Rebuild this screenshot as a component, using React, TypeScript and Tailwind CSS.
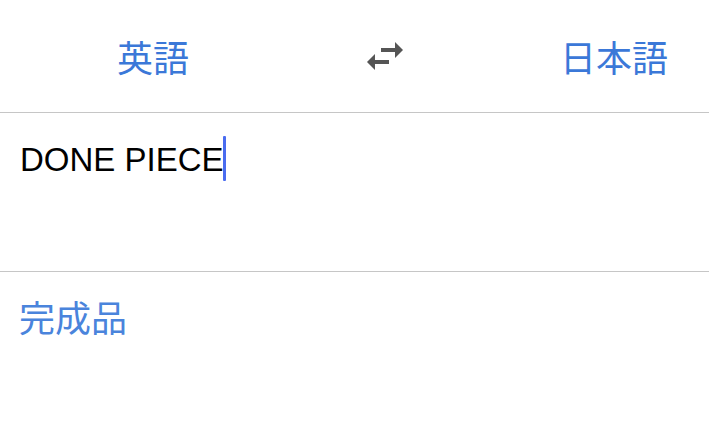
import React from "react";

const cjk = { fontFamily: '"Noto Sans CJK JP", "Noto Sans", sans-serif' };

export default function App() {
  return (
    <div className="w-[709px] h-[431px] bg-white overflow-hidden" style={{ fontFamily: '"Liberation Sans", Arial, sans-serif' }}>
      <div className="h-[113px] flex items-center border-b border-[#c6c6c6]">
        <div className="ml-[117px] text-[36px] leading-none text-[#3b78d8]" style={cjk}>英語</div>
        <div className="ml-[172px] w-[48px] h-[48px] flex items-center justify-center">
          <svg width="48" height="48" viewBox="0 0 24 24" fill="#555555">
            <path d="M6.99 11L3 15l3.99 4v-3H14v-2H6.99v-3zM21 9l-4-4v3H10v2h7v3l4-4z" />
          </svg>
        </div>
        <div className="ml-[151px] text-[36px] leading-none text-[#3b78d8]" style={cjk}>日本語</div>
      </div>
      <div className="h-[159px] border-b border-[#c6c6c6] pt-[23px] pl-[20px]">
        <div className="flex items-start">
          <span className="mt-[5px] text-[33px] leading-[38px] text-black">DONE PIECE</span>
          <span className="-ml-[1px] w-[3px] h-[45px] bg-[#4a6cf0] rounded-[1px]"></span>
        </div>
      </div>
      <div className="pt-[26px] pl-[19px]">
        <div className="text-[36px] leading-none text-[#4a84dc]" style={cjk}>完成品</div>
      </div>
    </div>
  );
}
